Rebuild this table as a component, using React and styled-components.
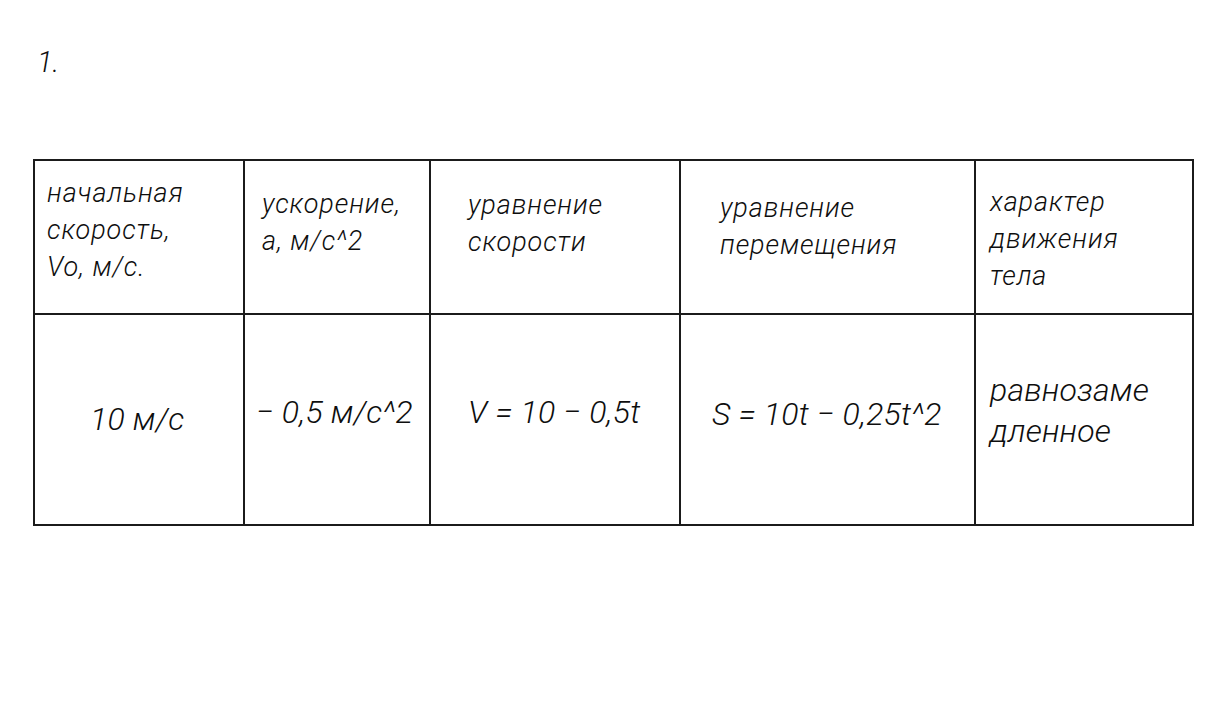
import React from "react";
import styled, { createGlobalStyle } from "styled-components";

const Global = createGlobalStyle`
  html, body { margin: 0; padding: 0; background: #ffffff; }
  body { font-family: Roboto, "Noto Sans", sans-serif; color: #0e0e0e; }
`;

const Page = styled.div`
  width: 1216px;
  height: 720px;
  box-sizing: border-box;
  padding: 43px 0 0 33px;
  background: #fff;
`;

const Number = styled.div`
  font-style: italic;
  font-size: 29px;
  font-weight: 300;
  line-height: 38px;
  padding-left: 4px;
  height: 116px;
`;

const Grid = styled.div`
  display: grid;
  grid-template-columns: 210px 186px 250px 295px 218px;
  grid-template-rows: 154px 211px;
  width: 1161px;
  box-sizing: border-box;
  border-left: 2px solid #1b1b1b;
  border-top: 2px solid #1b1b1b;
`;

const Cell = styled.div`
  box-sizing: border-box;
  border-right: 2px solid #1b1b1b;
  border-bottom: 2px solid #1b1b1b;
  padding: ${(p) => p.$top}px 0 0 ${(p) => p.$left}px;
  font-style: italic;
  white-space: nowrap;
`;

const HeadText = styled.div`
  font-size: 27px;
  line-height: 37px;
  letter-spacing: 0.9px;
  font-weight: 300;
`;

const BodyText = styled.div`
  font-size: 32px;
  line-height: 41px;
  letter-spacing: 0.2px;
  font-weight: 300;
`;

const head = [
  { left: 12, top: 14, lines: ["начальная", "скорость,", "Vo, м/с."] },
  { left: 17, top: 25, lines: ["ускорение,", "а, м/с^2"] },
  { left: 37, top: 26, lines: ["уравнение", "скорости"] },
  { left: 39, top: 29, lines: ["уравнение", "перемещения"] },
  { left: 14, top: 23, lines: ["характер", "движения", "тела"] },
];

const body = [
  { left: 55, top: 84, lines: ["10 м/с"] },
  { left: 11, top: 77, lines: ["− 0,5 м/с^2"] },
  { left: 37, top: 77, lines: ["V = 10 − 0,5t"] },
  { left: 31, top: 79, lines: ["S = 10t − 0,25t^2"] },
  { left: 14, top: 55, lines: ["равнозаме", "дленное"] },
];

export default function App() {
  return (
    <>
      <Global />
      <Page>
        <Number>1.</Number>
        <Grid>
          {head.map((c, i) => (
            <Cell key={"h" + i} $left={c.left} $top={c.top}>
              {c.lines.map((l, j) => (
                <HeadText key={j}>{l}</HeadText>
              ))}
            </Cell>
          ))}
          {body.map((c, i) => (
            <Cell key={"b" + i} $left={c.left} $top={c.top}>
              {c.lines.map((l, j) => (
                <BodyText key={j}>{l}</BodyText>
              ))}
            </Cell>
          ))}
        </Grid>
      </Page>
    </>
  );
}
